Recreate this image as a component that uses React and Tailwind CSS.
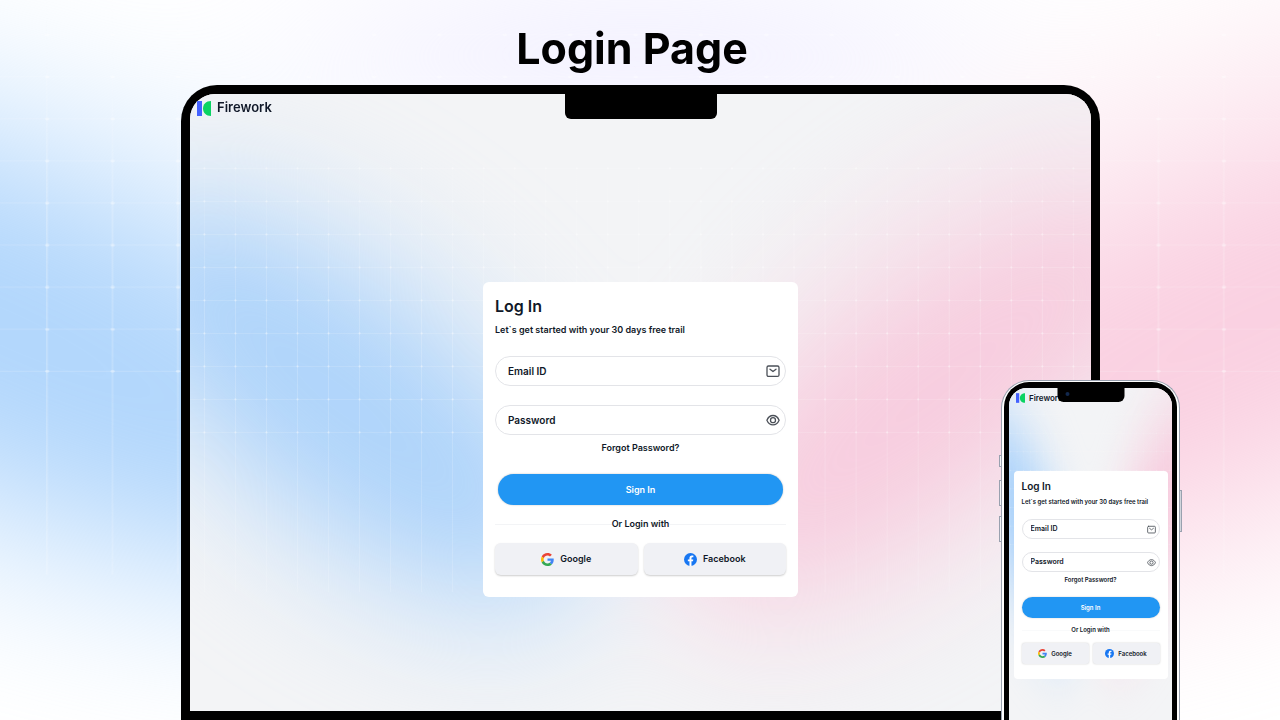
import { useId } from "react";
import clsx from "clsx";

const COLUMNS = Array.from({ length: 29 }, (_, i) => 14 + i * 31);
const ROWS = Array.from({ length: 9 }, (_, i) => 74 + i * 33);

function Backdrop({ viewBox, base, glow }) {
  const id = useId();
  return (
    <svg
      className="absolute inset-0 h-full w-full"
      viewBox={viewBox}
      preserveAspectRatio="none"
      aria-hidden="true"
    >
      <defs>
        <filter
          id={id + "blur"}
          x="-80%"
          y="-80%"
          width="260%"
          height="260%"
          colorInterpolationFilters="sRGB"
        >
          <feGaussianBlur stdDeviation="50" />
        </filter>
        <linearGradient id={id + "fade"} x1="0" y1="0" x2="0" y2="1">
          <stop offset="0" stopColor="#fff" stopOpacity="0" />
          <stop offset="0.4" stopColor="#fff" stopOpacity="0.25" />
          <stop offset="1" stopColor="#fff" stopOpacity="0.2" />
        </linearGradient>
      </defs>
      <rect x="-100" y="-100" width="1100" height="900" fill={base} />
      <g filter={`url(#${id}blur)`}>
        {glow && <ellipse cx="450" cy="90" rx="160" ry="50" fill="#e4e0ff" opacity="0.55" />}
        <ellipse
          cx="160"
          cy="310"
          rx="330"
          ry="180"
          fill="#b9dbfd"
          opacity="0.36"
          transform="rotate(42 160 310)"
        />
        <ellipse
          cx="150"
          cy="305"
          rx="265"
          ry="100"
          fill="#9ccbfb"
          opacity="0.72"
          transform="rotate(38 150 305)"
        />
        <ellipse
          cx="740"
          cy="290"
          rx="350"
          ry="180"
          fill="#fbd0e0"
          opacity="0.38"
          transform="rotate(-44 740 290)"
        />
        <ellipse
          cx="740"
          cy="300"
          rx="275"
          ry="95"
          fill="#f8bed5"
          opacity="0.6"
          transform="rotate(-38 740 300)"
        />
      </g>
      {COLUMNS.map((x) => (
        <rect key={x} x={x} y="20" width="0.7" height="478" fill={`url(#${id}fade)`} />
      ))}
      {ROWS.map((y) => (
        <rect key={y} x="0" y={y} width="900" height="0.7" fill="#fff" opacity="0.2" />
      ))}
      {ROWS.map((y) =>
        COLUMNS.map((x) => (
          <circle key={x + "-" + y} cx={x + 0.4} cy={y + 0.4} r="1.1" fill="#fff" opacity="0.35" />
        )),
      )}
    </svg>
  );
}

function Logo({ className }) {
  return (
    <svg className={className} viewBox="0 0 14 15" aria-hidden="true">
      <rect width="5" height="15" fill="#4361ff" />
      <path d="M14 0v15C9 15 6 11.6 6 7.500S9 0 14 0Z" fill="#0bd363" />
    </svg>
  );
}

function MailIcon({ className }) {
  return (
    <svg
      className={className}
      viewBox="0 0 14 14"
      fill="none"
      stroke="#4b5058"
      strokeWidth="1.3"
      strokeLinecap="round"
      strokeLinejoin="round"
      aria-hidden="true"
    >
      <rect x="1" y="2" width="12" height="10.400" rx="1.5" />
      <path d="m4 5.200 3 2.300 3-2.300" />
    </svg>
  );
}

function EyeIcon({ className }) {
  return (
    <svg
      className={className}
      viewBox="0 0 14 14"
      fill="none"
      stroke="#4b5058"
      strokeWidth="1.3"
      strokeLinejoin="round"
      aria-hidden="true"
    >
      <path d="M.9 7.200C2.300 4 4.400 2.500 7 2.500s4.700 1.500 6.100 4.700c-1.400 3.200-3.500 4.700-6.100 4.700S2.300 10.400.9 7.200Z" />
      <circle cx="7" cy="7.200" r="2.500" />
    </svg>
  );
}

function GoogleIcon({ className }) {
  return (
    <svg className={className} viewBox="0 0 48 48" aria-hidden="true">
      <path
        fill="#ea4335"
        d="M24 9.500c3.540 0 6.710 1.220 9.210 3.600l6.850-6.850C35.900 2.380 30.470 0 24 0 14.620 0 6.510 5.380 2.560 13.220l7.980 6.190C12.430 13.720 17.740 9.500 24 9.500z"
      />
      <path
        fill="#4285f4"
        d="M46.980 24.550c0-1.570-.15-3.090-.38-4.550H24v9.020h12.940c-.58 2.960-2.260 5.480-4.780 7.180l7.730 6c4.510-4.180 7.090-10.360 7.090-17.650z"
      />
      <path
        fill="#fbbc05"
        d="M10.530 28.590c-.48-1.450-.76-2.990-.76-4.590s.27-3.140.76-4.590l-7.980-6.190C.92 16.460 0 20.120 0 24c0 3.880.92 7.540 2.560 10.780l7.970-6.190z"
      />
      <path
        fill="#34a853"
        d="M24 48c6.480 0 11.930-2.130 15.890-5.810l-7.730-6c-2.150 1.450-4.920 2.300-8.160 2.300-6.260 0-11.570-4.220-13.470-9.910l-7.980 6.190C6.510 42.620 14.620 48 24 48z"
      />
    </svg>
  );
}

function FacebookIcon({ className }) {
  return (
    <svg className={className} viewBox="0 0 24 24" aria-hidden="true">
      <circle cx="12" cy="12" r="12" fill="#1877f2" />
      <path
        d="M10.100 23.850v-8.400H7.100V12h3V9.400c0-3 1.800-4.700 4.500-4.700 1.300 0 2.700.25 2.700.25v2.950h-1.500c-1.500 0-2 .93-2 1.900V12h3.350l-.55 3.450h-2.800v8.400a12 12 0 0 1-3.700 0Z"
        fill="#fff"
      />
    </svg>
  );
}

function Field({ type, label, icon: Icon, compact, className }) {
  return (
    <label
      className={clsx(
        "flex items-center rounded-full border border-[#e3e4e8] bg-white",
        compact ? "h-5 pl-2 pr-[3px]" : "h-[30px] pl-3 pr-[5px]",
        className,
      )}
    >
      <input
        type={type}
        placeholder={label}
        aria-label={label}
        className={clsx(
          "min-w-0 flex-1 bg-transparent font-semibold text-gray-900 outline-none placeholder:text-gray-900",
          compact ? "text-[7px]" : "text-[10px]",
        )}
      />
      <Icon className={compact ? "size-[9px]" : "size-3.5"} />
    </label>
  );
}

function SocialButton({ icon: Icon, name, compact }) {
  return (
    <button
      type="button"
      className={clsx(
        "flex flex-1 items-center justify-center bg-[#f0f1f5] font-semibold text-gray-900",
        compact
          ? "h-[21px] gap-1 rounded-[3px] text-[6px] shadow-[0_0_2px_rgba(0,0,0,0.2)]"
          : "h-8 gap-1.5 rounded-md text-[9px] shadow-[0_1px_2px_rgba(0,0,0,0.2)]",
      )}
    >
      <Icon className={compact ? "size-[9px]" : "size-[13px]"} />
      {name}
    </button>
  );
}

function LoginCard({ compact }) {
  return (
    <form
      onSubmit={(e) => e.preventDefault()}
      className={clsx(
        "flex flex-col bg-white text-gray-900",
        compact
          ? "w-[154px] rounded px-2 pb-[15px] pt-2"
          : "w-[315px] rounded-md px-3 pb-[22px] pt-3",
      )}
    >
      <h2
        className={clsx(
          "font-semibold",
          compact ? "text-[10px] leading-[14px]" : "text-[16px] leading-6",
        )}
      >
        Log In
      </h2>
      <p
        className={clsx(
          "mt-1 whitespace-nowrap font-semibold",
          compact ? "text-[6px] leading-[10px]" : "text-[9px] leading-4",
        )}
      >
        Let`s get started with your 30 days free trail
      </p>
      <Field
        type="email"
        label="Email ID"
        icon={MailIcon}
        compact={compact}
        className={compact ? "mt-3" : "mt-[18px]"}
      />
      <Field
        type="password"
        label="Password"
        icon={EyeIcon}
        compact={compact}
        className={compact ? "mt-[13px]" : "mt-[19px]"}
      />
      <a
        href="#forgot"
        className={clsx(
          "self-center font-semibold",
          compact ? "mt-1 text-[6px] leading-2" : "mt-1.5 text-[9px] leading-[14px]",
        )}
      >
        Forgot Password?
      </a>
      <button
        type="submit"
        className={clsx(
          "rounded-full bg-[#2196f3] font-semibold text-white",
          compact
            ? "mt-[13px] h-[21px] text-[6px] shadow-[0_0_2px_rgba(0,0,0,0.2)]"
            : "mx-[3px] mt-[19px] h-[31px] text-[9px] shadow-[0_0_2px_rgba(0,0,0,0.25)]",
        )}
      >
        Sign In
      </button>
      <div
        className={clsx(
          "flex items-center font-semibold",
          compact ? "mt-2 text-[6px] leading-2" : "mt-3 text-[9px] leading-[14px]",
        )}
      >
        <span className={clsx("h-px flex-1", compact ? "bg-gray-50" : "bg-gray-100")} />
        Or Login with
        <span className={clsx("h-px flex-1", compact ? "bg-gray-50" : "bg-gray-100")} />
      </div>
      <div className={clsx("flex", compact ? "mt-[9px] gap-1" : "mt-3 gap-1.5")}>
        <SocialButton icon={GoogleIcon} name="Google" compact={compact} />
        <SocialButton icon={FacebookIcon} name="Facebook" compact={compact} />
      </div>
    </form>
  );
}

function Laptop() {
  return (
    <section className="ml-[181px] mr-[180px] flex flex-1 flex-col rounded-t-[36px] bg-black p-[9px]">
      <div className="relative flex flex-1 flex-col overflow-hidden rounded-t-[25px] bg-gray-100">
        <Backdrop viewBox="0 0 900 617" base="#f3f4f6" />
        <div className="absolute left-1/2 top-0 h-[25px] w-[152px] -translate-x-1/2 rounded-b-md bg-black" />
        <header className="relative flex h-7 items-center gap-1.5 pl-[7px]">
          <Logo className="h-[15px] w-3.5" />
          <span className="text-[13px] font-semibold text-gray-900">Firework</span>
        </header>
        <main className="relative flex flex-1 items-center justify-center pt-[46px]">
          <LoginCard />
        </main>
      </div>
    </section>
  );
}

function Phone() {
  return (
    <section className="absolute bottom-0 right-[100px] top-[380px] w-[179px]">
      <span className="absolute -left-0.5 top-[75px] h-3 w-1 border border-gray-400 bg-gray-100" />
      <span className="absolute -left-0.5 top-[100px] h-[26px] w-1 border border-gray-400 bg-gray-100" />
      <span className="absolute -left-0.5 top-[136px] h-[26px] w-1 border border-gray-400 bg-gray-100" />
      <span className="absolute -right-0.5 top-[110px] h-[42px] w-1 border border-gray-400 bg-gray-300" />
      <div className="relative flex h-full flex-col rounded-t-[28px] border border-b-0 border-gray-400 bg-white px-0.5 pt-px">
        <div className="flex flex-1 flex-col rounded-t-[25px] bg-black px-[5px] pt-1.5">
          <div className="relative flex flex-1 flex-col overflow-hidden rounded-t-[18px] bg-gray-100">
            <Backdrop viewBox="70 60 760 590" base="#f3f4f6" />
            <header className="relative flex h-5 items-center gap-1 pl-[7px]">
              <Logo className="h-2.5 w-[9px]" />
              <span className="text-[8px] font-semibold text-gray-900">Firework</span>
            </header>
            <div className="absolute left-1/2 top-0 h-3.5 w-[67px] -translate-x-1/2 rounded-b-md bg-black">
              <span className="absolute left-2 top-1 size-1 rounded-full bg-[#12284d]" />
            </div>
            <main className="relative flex justify-center pt-[63px]">
              <LoginCard compact />
            </main>
          </div>
        </div>
      </div>
    </section>
  );
}

export default function App() {
  return (
    <div className="relative flex min-h-screen flex-col overflow-hidden bg-white font-['Inter',sans-serif]">
      <Backdrop viewBox="147 47 607 565" base="#ffffff" glow />
      <div className="relative flex flex-1 flex-col">
        <h1 className="mb-[13px] pr-4 pt-6 text-center text-[43px] font-bold leading-12 text-black">
          Login Page
        </h1>
        <Laptop />
        <Phone />
      </div>
    </div>
  );
}
